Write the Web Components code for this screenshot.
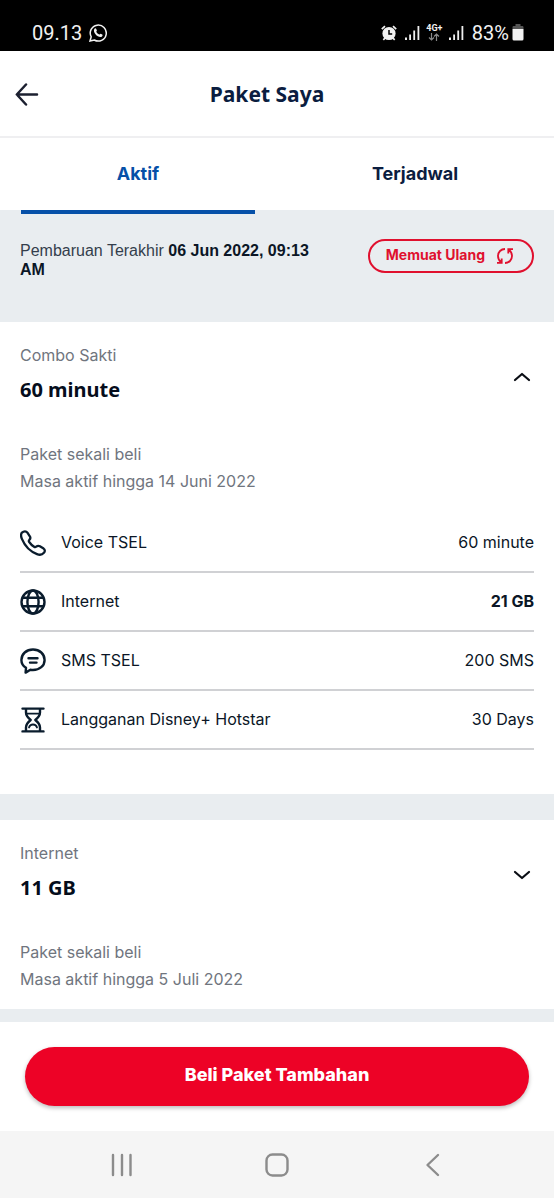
<!DOCTYPE html>
<html lang="id">
<head>
<meta charset="utf-8">
<meta name="viewport" content="width=device-width, initial-scale=1">
<title>Paket Saya</title>
<style>
html, body { margin: 0; background: #fff; }
body { font-family: Inter, "Open Sans", sans-serif; font-size: 16px; line-height: 24px; color: #0b1626; }
</style>
</head>
<body>
<paket-app></paket-app>

<script>
const define = (name, html, setup) => customElements.define(name, class extends HTMLElement {
  constructor() {
    super();
    const t = document.createElement('template');
    t.innerHTML = html;
    this.attachShadow({ mode: 'open' }).append(t.content.cloneNode(true));
  }
  connectedCallback() { if (setup) setup(this, this.shadowRoot); }
});

const icons = {
  back: '<svg width="24" height="24" viewBox="0 0 24 24" fill="none" stroke="#1c2030" stroke-width="2.500" stroke-linecap="round" stroke-linejoin="round"><path d="M22 12.500H2M11 2.500L1.800 12.500L11 22.500"/></svg>',
  refresh: '<svg width="18" height="18" viewBox="0 0 18 18" fill="none" stroke="currentColor" stroke-width="1.800"><path d="M9 2C5 2 2 5 2 9c0 2.500 1 4.500 3 6.200M1 15.800h4.700v-4.300M9 16c4 0 7-3 7-7 0-2.500-1-4.500-3-6.200M17 2.200h-4.700v4.300"/></svg>',
  phone: '<svg width="26" height="26" viewBox="0 0 26 26" fill="none" stroke="currentColor" stroke-width="2.300" stroke-linejoin="round"><path d="M2 2.600C3.800.9 6.200.9 7.400 2.600l2.600 4c.8 1.500.2 2.500-.7 3.300-.7.800-.6 1.400-.1 2.100 1.300 1.900 2.900 3.500 4.900 4.800.8.500 1.400.5 2.100-.1 1.200-1 2.300-1.200 3.700-.4l3.700 2.300c1.500 1.100 1.600 2.700.3 4.200-1.800 2.100-4.200 2.400-6.900 1.300C10.100 21.500 4.600 15.400 1.900 8.900 1 6.700.6 4.200 2 2.600z"/></svg>',
  globe: '<svg width="26" height="26" viewBox="0 0 26 26" fill="none" stroke="currentColor" stroke-width="2.400"><circle cx="13" cy="13" r="11.500"/><ellipse cx="13" cy="13" rx="5.600" ry="11.500"/><path d="M2.500 8.700h21M2.500 17.300h21"/></svg>',
  sms: '<svg width="26" height="26" viewBox="0 0 26 26" fill="none" stroke="currentColor" stroke-width="2.400" stroke-linecap="round" stroke-linejoin="round"><path d="M13 1.500c6.600 0 11.600 4.500 11.600 10.400S19.600 22 13 22c-.9 0-1.800-.1-2.600-.2L5.600 24.600 6 19.800C3 17.900 1.400 15.300 1.400 11.900 1.400 6 6.400 1.500 13 1.500z"/><path d="M8.500 10.200h9M10 14.600h6.500"/></svg>',
  hourglass: '<svg width="26" height="26" viewBox="0 0 26 26" fill="none" stroke="currentColor" stroke-width="2.400" stroke-linecap="round" stroke-linejoin="round"><path d="M2.500 1.600h21M2.500 24.400h21M6 1.600v4c0 3.300 1.900 5.200 4.700 7.400C7.900 15.200 6 17.100 6 20.400v4M20 1.600v4c0 3.300-1.900 5.200-4.700 7.400 2.800 2.200 4.700 4.100 4.700 7.400v4"/><path stroke-width="1.800" d="M6.500 6.600h13M9 20.500c.6-2 2-3 4-3s3.400 1 4 3"/></svg>',
  up: '<svg width="18" height="12" viewBox="0 0 18 12" fill="none" stroke="#0a0d14" stroke-width="2.200" stroke-linecap="round" stroke-linejoin="round"><path d="M2 9l7-6L16 9"/></svg>',
  down: '<svg width="18" height="12" viewBox="0 0 18 12" fill="none" stroke="#0a0d14" stroke-width="2.200" stroke-linecap="round" stroke-linejoin="round"><path d="M2 3L9 9l7-6"/></svg>',
  signal: '<svg width="15" height="16" viewBox="0 0 15 16" fill="#eee"><path d="M0 12.500h2V15H0zM4.200 9.500h1.800V15H4.200zM8.300 5.500h1.800V15H8.300zM12.500 1h1.800v14h-1.800z"/></svg>'
};

define('status-bar', `
<style>
:host { display: flex; justify-content: space-between; align-items: center; box-sizing: border-box; height: 51px; padding: 14px 30px 0 32px; background: #000; color: #f2f2f2; font: 20px/24px Roboto, sans-serif; }
div { display: flex; align-items: center; }
.left { gap: 7px; }
.right { gap: 8px; }
.net { display: flex; flex-direction: column; align-items: center; width: 17px; font-size: 9px; line-height: 9px; font-weight: 700; margin: 0 -2px; }
.power { gap: 3px; }
svg { display: block; }
</style>
<div class="left"><span>09.13</span>
<svg width="18" height="18" viewBox="0 0 18 18" fill="none" stroke="#f2f2f2" stroke-width="1.500"><path d="M1 17l1.200-4.200A8 8 0 1 1 5.300 16z"/><path fill="#f2f2f2" stroke="none" d="M5.200 5.300c.8-1.400 1.700-1.200 2.100-.2l.6 1.400c.1.500-.7 1-.6 1.400.7 1.200 1.600 2.100 2.900 2.700.5.200 1-.9 1.400-.8l1.600.8c.9.500.1 2-.9 2.400-3.300 1-8.700-4.300-7.100-7.700z"/></svg></div>
<div class="right">
<svg width="16" height="16" viewBox="0 0 16 16"><circle cx="8" cy="8.500" r="6.600" fill="#f2f2f2"/><path d="M.8 4.200L4 1.100M15.200 4.200L12 1.100M2.300 14.800l2-2M13.700 14.800l-2-2" stroke="#f2f2f2" stroke-width="1.700" fill="none"/><path d="M8 5v4h3.200" fill="none" stroke="#000" stroke-width="1.500"/></svg>
${icons.signal}
<span class="net"><span>4G+</span><svg width="12" height="8" viewBox="0 0 12 8" fill="none" stroke="#888" stroke-width="1.200"><path d="M3.500 0v7M1 4.500L3.500 7 6 4.500M8.500 8V1M6 3.500L8.500 1 11 3.500"/></svg></span>
${icons.signal}
<div class="power"><span>83%</span><svg width="12" height="17" viewBox="0 0 11 17"><path d="M3 0h5v2h2.200l.8.800V5H0V2.800L.8 2H3z" fill="#555"/><path d="M0 5h11v10a1.500 1.500 0 0 1-1.500 1.500h-8A1.500 1.500 0 0 1 0 15z" fill="#f2f2f2"/></svg></div>
</div>`);

define('page-header', `
<style>
:host { display: grid; grid-template-columns: 24px 1fr 44px; align-items: center; box-sizing: border-box; height: 87px; padding: 0 15px; color: #0b1d40; border-bottom: 2px solid #efeff1; }
button { display: block; padding: 0; border: 0; background: none; height: 24px; }
svg { display: block; }
h1 { margin: 0; text-align: center; font: 700 21px/28px "Noto Sans", sans-serif; }
</style>
<button aria-label="Kembali">${icons.back}</button><h1><slot></slot></h1>`);

define('tab-item', `
<style>
:host { display: flex; flex: 1; padding: 0 22px 0 21px; color: #0b1d40; }
button { flex: 1; padding: 0; border: 0; border-bottom: 4px solid transparent; background: none; color: inherit; font: 700 18px/24px Inter, sans-serif; }
:host([selected]) { color: #0650a8; }
:host([selected]) button { border-color: #0650a8; }
</style>
<button role="tab"><slot></slot></button>`, (el, root) => root.querySelector('button').setAttribute('aria-selected', el.hasAttribute('selected')));

define('tab-strip', `
<style>
:host { display: flex; height: 76px; background: linear-gradient(#fff 72px, #e9edf0 72px); }
</style><slot></slot>`);

define('update-bar', `
<style>
:host { display: flex; justify-content: space-between; align-items: flex-start; gap: 20px; box-sizing: border-box; min-height: 108px; padding: 25px 20px; background: #e9edf0; }
p { margin: 0; padding-top: 2px; flex: 0 1 300px; font: 16px/19px "Liberation Sans", sans-serif; color: #343e4c; }
b { color: #0b1626; }
button { display: flex; align-items: center; gap: 11px; box-sizing: border-box; height: 34px; padding: 0 18px 2px 16px; border: 2px solid #e0102e; border-radius: 17px; background: none; color: #e0102e; font: 700 14px/20px Inter, sans-serif; white-space: nowrap; }
svg { display: block; margin-top: 2px; }
</style>
<p>Pembaruan Terakhir <b><slot name="date"></slot></b> <b><slot name="half"></slot></b></p>
<button>Memuat Ulang ${icons.refresh}</button>`);

define('quota-row', `
<style>
:host { display: flex; align-items: center; gap: 15px; box-sizing: border-box; height: 59px; border-bottom: 2px solid #d0d1d4; color: #0b1626; }
.icon { display: flex; color: #0a1c2d; }
.name { flex: 1; }
.name, .value { padding-bottom: 1px; }
:host([strong]) .value { font-weight: 700; }
</style>
<span class="icon"></span><span class="name"><slot></slot></span><span class="value"><slot name="value"></slot></span>`,
(el, root) => { root.querySelector('.icon').innerHTML = icons[el.getAttribute('icon')]; });

define('package-card', `
<style>
:host { display: block; padding: 20px 20px 16px; background: #fff; }
header { display: flex; justify-content: space-between; align-items: center; }
.kind, .meta { color: #70757e; }
.kind { margin: 0; line-height: 26px; }
h2 { margin: 0; font: 700 20px/30px "Noto Sans", sans-serif; color: #050d1c; padding-top: 7px; }
button { display: flex; padding: 12px 3px 6px; border: 0; background: none; }
.meta { margin: 36px 0 0; line-height: 27px; }
:host([open]) { padding-bottom: 44px; }
:host([open]) .rows { margin-top: 19px; }
</style>
<header><div><p class="kind"><slot name="kind"></slot></p><h2><slot name="title"></slot></h2></div><button aria-label="Detail paket"></button></header>
<p class="meta"><slot name="type"></slot><br><slot name="expiry"></slot></p>
<div class="rows"><slot></slot></div>`,
(el, root) => {
  const open = el.hasAttribute('open'), b = root.querySelector('button');
  b.innerHTML = icons[open ? 'up' : 'down'];
  b.setAttribute('aria-expanded', open);
});

define('buy-bar', `
<style>
:host { display: block; padding: 25px; background: #fff; }
button { display: block; width: 100%; height: 59px; padding: 0 0 4px; border: 0; border-radius: 30px; background: #ed0226; color: #fff; font: 800 18px/24px Inter, sans-serif; box-shadow: 0 2px 4px #0004; }
</style>
<button><slot></slot></button>`);

define('system-nav', `
<style>
:host { display: flex; justify-content: center; gap: 100px; align-items: center; height: 67px; background: #f5f5f5; }
button { display: flex; justify-content: center; width: 56px; padding: 0; border: 0; background: none; }
svg { fill: none; stroke: #8c8c8c; stroke-width: 2.400; stroke-linecap: round; stroke-linejoin: round; }
</style>
<button aria-label="Aplikasi terbaru"><svg width="24" height="24" viewBox="0 0 24 24"><path d="M4 2v20M13 2v20M21.500 2v20"/></svg></button>
<button aria-label="Beranda"><svg width="24" height="24" viewBox="0 0 24 24"><rect x="1.500" y="1.500" width="21" height="21" rx="6"/></svg></button>
<button aria-label="Kembali"><svg width="24" height="24" viewBox="0 0 24 24"><path d="M17 2L6.500 12L17 22"/></svg></button>`);

define('paket-app', `
<style>
:host { display: flex; flex-direction: column; min-height: 100vh; background: #fff; }
main { display: flex; flex-direction: column; gap: 26px; background: #e9edf0; padding-bottom: 13px; }
</style>
<status-bar></status-bar>
<page-header>Paket Saya</page-header>
<tab-strip role="tablist"><tab-item selected>Aktif</tab-item><tab-item>Terjadwal</tab-item></tab-strip>
<update-bar><span slot="date">06 Jun 2022, 09:13</span><span slot="half">AM</span></update-bar>
<main>
<package-card open>
<span slot="kind">Combo Sakti</span><span slot="title">60 minute</span>
<span slot="type">Paket sekali beli</span><span slot="expiry">Masa aktif hingga 14 Juni 2022</span>
<quota-row icon="phone">Voice TSEL<span slot="value">60 minute</span></quota-row>
<quota-row icon="globe" strong>Internet<span slot="value">21 GB</span></quota-row>
<quota-row icon="sms">SMS TSEL<span slot="value">200 SMS</span></quota-row>
<quota-row icon="hourglass">Langganan Disney+ Hotstar<span slot="value">30 Days</span></quota-row>
</package-card>
<package-card>
<span slot="kind">Internet</span><span slot="title">11 GB</span>
<span slot="type">Paket sekali beli</span><span slot="expiry">Masa aktif hingga 5 Juli 2022</span>
</package-card>
</main>
<buy-bar>Beli Paket Tambahan</buy-bar>
<system-nav></system-nav>`);
</script>
</body>
</html>
